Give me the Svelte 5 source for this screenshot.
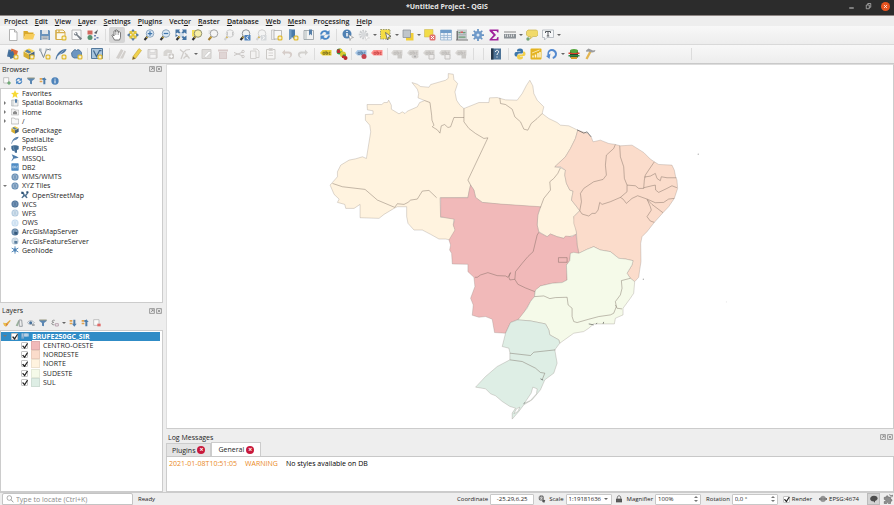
<script>
  const badge = '<rect x="13" y="13" width="10" height="10" rx="3" fill="#dfb92f"/><path d="M18 15v6M15 18h6" stroke="#fff" stroke-width="2"/>';
  const lens = (fill, ring = '#8d9299', grip = '#2e3033') =>
    `<path d="M9 15L3 22" stroke="${grip}" stroke-width="4"/><path d="M10 14L7 17.500" stroke="#d9b13a" stroke-width="3"/><circle cx="14" cy="9" r="7.500" fill="${fill}" stroke="${ring}" stroke-width="2"/>`;
  const tag = (fill, ink) =>
    `<path d="M0 10L5 4H23V15H5Z" fill="${fill}"/><path d="M6 8.500h4v4H6zM12 5.500v7h3v-4h-3M21 8.500h-3v4h3" fill="none" stroke="${ink}" stroke-width="1.500"/>`;
  const globe = (fill, line) =>
    `<circle cx="12" cy="12" r="10.500" fill="${fill}"/><path d="M2 9h20M2 15h20M12 2c-6 6-6 14 0 20M12 2c6 6 6 14 0 20" fill="none" stroke="${line}" stroke-width="1.600"/>`;

  const icons = {
    page: '<path d="M5 1h10l5 5v17H5z" fill="#fff" stroke="#9b9b9b" stroke-width="1.500"/><path d="M15 1v5h5" fill="#eee" stroke="#9b9b9b" stroke-width="1.500"/>',
    open: '<path d="M1 4h8l2 3h10v4H5L1 20z" fill="#d9a92b"/><path d="M5 10h19l-4 11H1z" fill="#f7cd5c"/>',
    save: '<path d="M2 2h18l2 2v18H2z" fill="#6b93bb"/><path d="M6 2h12v8H6z" fill="#e3e6e9"/><path d="M5 14h14v8H5z" fill="#c9ced3"/><path d="M7 16h10M7 19h10" stroke="#717e8b"/>',
    layout: '<path d="M2 2h14l4 4v15H2z" fill="#fbf8ee" stroke="#d5ad4c" stroke-width="2"/><path d="M2 2v19M2 7h18M8 2v5" stroke="#d5ad4c" stroke-width="2.500"/>' + badge,
    manager: '<path d="M2 2h18v19H2z" fill="#fafafa" stroke="#a5a5a5" stroke-width="1.500"/><path d="M6 8a4 4 0 0 0 5 5l8 9 3-3-9-8a4 4 0 0 0-5-5l3 3-2 2z" fill="#747c84"/>',
    style: '<path d="M1 3h10v8H1z" fill="#d2695f"/><path d="M14 8l8-7-3 9z" fill="#5c6065"/><circle cx="6" cy="17" r="5" fill="#569270"/><path d="M14 12h4v3h-4zM19 16h4v3h-4zM14 19h4v3h-4z" fill="#6e83b1"/>',
    pan: '<path d="M7 22L2 13c0-2 3-2 4 1V5c0-2 3-2 3 0V3c0-2 3-2 3 0v2c0-2 3-2 3 0v2c0-2 4-2 4 1v9l-2 5z" fill="#fff" stroke="#4c4c4c" stroke-width="1.400"/><path d="M9 5v7M12 5v7M15 6v6" stroke="#777"/>',
    panSel: '<path d="M12 0l5 6H7zM12 24l5-6H7zM0 12l6-5v10zM24 12l-6-5v10z" fill="#5b80a8"/><path d="M5 4h6v6H5zM13 4h6v6h-6zM5 13h6v6H5zM13 13h6v6h-6zM9 9h6v6H9z" fill="#e2c63a"/>',
    zoomIn: lens('#dbe8f4', '#8ba4bd') + '<path d="M14 4.500v9M9.500 9h9" stroke="#3f76ad" stroke-width="2.500"/>',
    zoomOut: lens('#dbe8f4', '#8ba4bd') + '<path d="M9.500 9h9" stroke="#3f76ad" stroke-width="2.500"/>',
    zoomFull: '<path d="M9 15L3 22" stroke="#2e3033" stroke-width="4"/><path d="M11 13L7 17.500" stroke="#d9b13a" stroke-width="3"/><circle cx="13" cy="11" r="5" fill="#d2deea"/><path d="M1 1h9l-2 3 3 3-3 2-3-2-4 3zM23 1h-9l2 3-3 3 3 2 3-2 4 3zM23 22h-9l2-3-3-3 3-2 3 2 4-3zM1 16v-6l5 3z" fill="#4675a4"/>',
    zoomSel: '<path d="M2 2h11v13H2z" fill="#f4e05a"/>' + lens('#f6eea9', '#8f8f72'),
    zoomLayer: '<path d="M3 2h6v8H3z" fill="#e3e3e3"/>' + lens('#f5f5f5', '#a2a2a2', '#a27b32'),
    zoomNative: lens('#f3f3f3', '#d0d0d0', '#d2d2d2') + '<path d="M9 6v7M19 6v7" stroke="#bbb" stroke-width="1.500"/>',
    zoomLast: lens('#f1f3f5') + '<path d="M11 12h12v11H11z" fill="#4f82bd"/><path d="M19 14l-4 3.500 4 3.500" fill="none" stroke="#fff" stroke-width="2"/>',
    zoomNext: lens('#f4f4f4', '#d0d0d0', '#d2d2d2') + '<path d="M12 12h11v11H12z" fill="#d5d8db"/><path d="M15 14l4 3.500-4 3.500" fill="none" stroke="#fff" stroke-width="2"/>',
    mapView: '<path d="M1 2h7v19H1z" fill="#eee" stroke="#a7a7a7"/><path d="M6 3h15v17H6z" fill="#f7f7f7" stroke="#a7a7a7" stroke-width="1.500"/>' + badge,
    bookNew: '<path d="M4 1h12v21l-6-6-6 6z" fill="#4b7cab"/><path d="M4 1h5v18l-5 3z" fill="#6f9ac2"/>' + badge,
    book: '<path d="M2 3h19v18H2z" fill="#f2f2f2" stroke="#8e959b" stroke-width="1.500"/><path d="M6 3v18" stroke="#9aa" stroke-width="1.500"/><path d="M12 1h6v12l-3-3-3 3z" fill="#557fa8"/>',
    refresh: '<path d="M2 11C3 2 13 0 18 5l3-3v9h-9l3-3C11 4 7 6 6 11zM22 13c-1 9-11 11-16 6l-3 3v-9h9l-3 3c4 4 8 2 9-3z" fill="#4a86c5"/>',
    identify: '<circle cx="10" cy="10" r="9" fill="#5182b4"/><path d="M10 4v2M10 8v7" stroke="#fff" stroke-width="3"/><path d="M13 11l10 6-5 1-2 5z" fill="#fff" stroke="#777"/>',
    action: '<circle cx="11" cy="11" r="7" fill="none" stroke="#c9cbcd" stroke-width="5" stroke-dasharray="3 2"/><circle cx="11" cy="11" r="5" fill="#d8dadc"/><path d="M14 13l9 5-5 1-2 4z" fill="#fff" stroke="#ccc"/>',
    select: '<path d="M1 1h19v19H1z" fill="#f4dc42" stroke="#9a9a72" stroke-width="2" stroke-dasharray="3 2"/><path d="M11 7l11 8-5 1-2 6z" fill="#f7f7f7" stroke="#555" stroke-width="1.500"/>',
    selectForm: '<path d="M8 8h15v15H8z" fill="#f2cf35"/><path d="M2 2h15v15H2z" fill="#bfc5ca" stroke="#8b9299" stroke-width="1.500"/>',
    deselect: '<path d="M1 1h17v15H1z" fill="#f2dc49" stroke="#c5b04a"/><rect x="11" y="11" width="12" height="12" rx="3" fill="#e0716e"/><path d="M14 14l6 6M20 14l-6 6" stroke="#fff" stroke-width="2"/>',
    table: '<path d="M1 2h22v20H1z" fill="#e9f0f7" stroke="#8fb0cf" stroke-width="1.500"/><path d="M1 2h22v6H1z" fill="#6f9cc9"/><path d="M1 13h22M1 17h22M8 8v14M15 8v14" stroke="#94b3d1" stroke-width="1.500"/>',
    calc: '<path d="M2 1h20v20H2z" fill="#c8cccf"/><path d="M0 21h24v2H0zM1 4h3v18H1z" fill="#777"/><path d="M5 7h4M14 7h5M5 16h14" stroke="#6c9c77" stroke-width="2.500"/><path d="M4 11.500h16" stroke="#a5adb2" stroke-width="2"/><path d="M9 5h5v3H9z" fill="#d05e5e"/>',
    gear: '<path d="M12 0v24M0 12h24M3.500 3.500l17 17M20.500 3.500l-17 17" stroke="#6893c2" stroke-width="3.500"/><circle cx="12" cy="12" r="8" fill="#6f9aca"/><circle cx="12" cy="12" r="3" fill="#dce7f2"/>',
    sum: '<path d="M3 1h18v6h-2l-2-3H9l7 8-8 8h9l2-4h2v7H3v-2l8-9-8-8z" fill="#a0219b"/>',
    measure: '<path d="M0 6h24" stroke="#888" stroke-width="2"/><path d="M0 10h24v9H0z" fill="#8b9196"/><path d="M3 11v4M7 11v5M11 11v4M15 11v5M19 11v4" stroke="#eee" stroke-width="1.500"/>',
    tip: '<path d="M4 2h17l3 3v7l-3 3h-7l-6 5 1-5H4l-3-3V5z" fill="#f1da6a" stroke="#cbb65a" stroke-width="1.500"/><circle cx="4" cy="20" r="3.500" fill="#72a477"/>',
    text: '<path d="M1 2h22v15H10l-5 5v-5H1z" fill="#f7f8f9" stroke="#a8afb5" stroke-width="1.500"/><path d="M7 5h10v3M12 5v9M7 5v3M9.500 14h5" stroke="#54595e" stroke-width="2" fill="none"/>',
    source: '<path d="M3 3l14 2-3 15L0 17z" fill="#4e759e"/><path d="M9 1l13 5-4 14L6 14z" fill="#d86a38"/><path d="M2 9l10-3 4 12-9 4z" fill="#3f6e9d" />' + badge,
    geopkg: '<path d="M12 1l11 5-11 6L1 6z" fill="#f2d04a"/><path d="M1 7l11 6v10L1 17z" fill="#d6ae30"/><path d="M12 13l11-6v10l-11 6z" fill="#44607b"/><path d="M8 3l9 5-5 3-8-4z" fill="#577fa8"/>',
    vectorNew: '<path d="M2 3l7 16L15 3h8" fill="none" stroke="#7a8893" stroke-width="2"/><path d="M0 1h5v5H0zM13 1h4v4h-4zM20 1h4v4h-4z" fill="#aab4bc"/>' + badge,
    feather: '<path d="M1 23C3 11 11 2 23 2c-1 6-7 9-11 10-5 2-8 5-9 11z" fill="#5079a5"/><path d="M4 18L17 5" stroke="#c3d3e3"/>',
    virtual: '<path d="M5 5l3-2 3 2 3-2 4 2 3 4v8l-4 3H6l-4-3-1-7z" fill="#6d96c1" stroke="#42698f" stroke-width="1.500"/>' + badge,
    mesh: '<path d="M1 1h22v20H1z" fill="#a9c5dd" stroke="#53789b" stroke-width="2"/><path d="M5 5l6 12 6-12h4" fill="none" stroke="#42688e" stroke-width="2.500"/>' + badge,
    edits: '<path d="M2 20L12 2l5 3L8 22zM10 21L19 5l3 2-6 14z" fill="#d2cfcc"/>',
    pencil: '<path d="M4 17L16 1l5 4L9 21l-6 2z" fill="#f0d14b" stroke="#b99b2c"/><path d="M4 17l5 4-6 2z" fill="#77623a"/>',
    saveOff: '<path d="M2 3h18v17H2z" fill="#e2e0de" stroke="#cbc8c5" stroke-width="2"/><path d="M6 3h10v6H6zM6 13h12v7H6z" fill="#f5f4f3" stroke="#ccc"/>',
    addOff: '<path d="M1 8c5-8 12-4 17-4v6H9v6H1z" fill="#d7d5d2"/><rect x="11" y="11" width="11" height="11" rx="3" fill="#cbc8c5"/><path d="M16.500 13v7M13 16.500h7" stroke="#fff" stroke-width="2"/>',
    vertexOff: '<path d="M2 3l7 6 5-5 8-1M9 9L4 22M12 10l9 11M17 13l-8 8" fill="none" stroke="#cfccc9" stroke-width="2.500"/>',
    modifyOff: '<path d="M2 3h18v18H2z" fill="#dfdddb" stroke="#cecccA" stroke-width="2"/><path d="M6 17l10-11 4 3-10 10z" fill="#fff" stroke="#bbb"/>',
    trashOff: '<path d="M2 3h20v4H2zM4 8h16v14H4z" fill="#d7c9c8"/><path d="M8 9v11M12 9v11M16 9v11" stroke="#eee9e9" stroke-width="1.500"/>',
    cutOff: '<path d="M2 9l18 7M2 15l18-7" stroke="#cbc8c6" stroke-width="2"/><circle cx="20" cy="7" r="2.500" fill="none" stroke="#cbc8c6" stroke-width="2"/><circle cx="20" cy="17" r="2.500" fill="none" stroke="#cbc8c6" stroke-width="2"/>',
    copyOff: '<path d="M3 6h11v15H3zM8 2h8l4 4v13h-6" fill="#f3f2f1" stroke="#ceccca" stroke-width="1.800"/>',
    pasteOff: '<path d="M3 3h17v19H3z" fill="#f6f5f4" stroke="#cbc9c6" stroke-width="2"/><path d="M8 1h7v4H8zM7 10h9M7 15h9" stroke="#d5d3d1" stroke-width="2" fill="none"/>',
    undoOff: '<path d="M8 3L2 9l6 6v-4h7c5 0 5 8-3 9 12 1 14-13 3-13H8z" fill="#d6cdc9"/>',
    redoOff: '<path d="M16 3l6 6-6 6v-4H9c-5 0-5 8 3 9C0 21-2 7 9 7h7z" fill="#d3d1ce"/>',
    label: tag('#e9d032', '#6b5f1c'),
    diagram: '<circle cx="7" cy="7" r="6" fill="#2f9a47"/><path d="M7 7V1a6 6 0 0 1 6 6z" fill="#f4d326"/><circle cx="14" cy="13" r="6" fill="#d9c72f"/><path d="M14 13h6a6 6 0 0 1-6 6z" fill="#2f9a47"/><circle cx="19" cy="20" r="4" fill="#b82828"/><path d="M2 3h6v7H2z" fill="#b92f33"/><path d="M12 15h6v5h-6z" fill="#b92f33"/>',
    labelPin: tag('#a8c7e6', '#4d7299') + '<circle cx="18" cy="17" r="5" fill="#c44350"/>',
    labelRed: tag('#ff8d8b', '#c23b3b'),
    labelOff: tag('#d8d6d3', '#b9b7b4') + '<path d="M13 13h9v8h-9z" fill="#cbc9c6"/>',
    labelEye: tag('#d8d6d3', '#b9b7b4') + '<ellipse cx="16" cy="17" rx="7" ry="4" fill="#d3d1cf"/><circle cx="16" cy="17" r="2" fill="#aaa"/>',
    labelMove: tag('#d8d6d3', '#b9b7b4') + '<path d="M12 13h10v9H12z" fill="#eeeceb" stroke="#c4c2c0" stroke-width="2"/>',
    help: '<path d="M2 1h20v22H2z" fill="#4d7397"/><path d="M2 1h5v22H2z" fill="#26384b"/><path d="M11 8c0-5 7-4 6 0 0 2-3 3-3 6M14 17v2" fill="none" stroke="#fff" stroke-width="2"/>',
    python: '<path d="M12 1c-5 0-6 2-6 5v1h7v1H4c-4 0-4 9 0 9h3v-3c0-2 2-3 4-3h5c2 0 2-2 2-5s-1-5-6-5z" fill="#3d76a9"/><path d="M12 23c5 0 6-2 6-5v-1h-6v-1h8c4 0 4-9 0-9h-2v3c0 2-1 3-4 3h-5c-2 0-3 2-3 5 0 4 3 5 6 5z" fill="#f2cf4c"/>',
    chart: '<rect x="1" y="1" width="22" height="22" rx="2" fill="#e4b321"/><path d="M6 19v-4M11 19v-6M16 19v-9M20 19V8" stroke="#fff6d5" stroke-width="3"/><path d="M4 10L19 4" stroke="#fff6d5" stroke-width="1.500"/>',
    reload: '<path d="M3 15C1 3 12-1 19 5c6 6 2 15-5 17l-1-4c6-2 6-7 3-10-4-4-11-2-10 5l3-2-2 11-7-6z" fill="#5389cf"/>',
    plugin: '<path d="M4 5h16v14H4z" fill="#2f4229"/><path d="M1 9h22v3H1z" fill="#d9442e"/><path d="M1 14h22v3H1z" fill="#2e8b47"/><ellipse cx="12" cy="6" rx="8" ry="4" fill="#56a63d"/><path d="M6 18h12v4H6z" fill="#d59c2e"/>',
    hammer: '<path d="M11 6l4 2-8 15-4-2z" fill="#e3b54f"/><path d="M4 5l5-4 9 4 5-1-2 4-5 1-8-2-3 1z" fill="#9b9c9d"/>',
    addLayer: '<path d="M2 2h15v16H2z" fill="#fafafa" stroke="#aaa" stroke-width="2"/><path d="M18 13v10M13 18h10" stroke="#67a66d" stroke-width="4"/>',
    filter: '<path d="M1 2h22v4l-8 6v10l-6-2v-8L1 6z" fill="#5b87b3"/><path d="M1 2h22v2H1z" fill="#b7a26a"/>',
    collapse: '<path d="M2 3h8v5H2zM2 11h8v5H2z" fill="#e2a24e"/><path d="M10 3h5v5h-5zM16 1l7 8h-4v13h-6V9h-3z" fill="#4f7eac"/>',
    expand: '<path d="M2 3h8v5H2zM2 11h8v5H2z" fill="#e2a24e"/><path d="M13 2h6v12h4l-7 9-7-9h4z" fill="#4f7eac"/>',
    info: '<circle cx="12" cy="12" r="11" fill="#4e83ba"/><path d="M12 5v3M12 10v9" stroke="#fff" stroke-width="3"/>',
    star: '<path d="M12 0l3.500 8 8.500 1-6.500 5.500L19.500 24 12 19l-7.500 5 2-9.500L0 9l8.500-1z" fill="#f7d935"/>',
    home: '<path d="M1 3h9l2 3h11v15H1z" fill="#f2f2f2" stroke="#a5a5a5" stroke-width="1.500"/><path d="M6 13l6-5 6 5v6H6z" fill="#8b8b8b"/>',
    folder: '<path d="M1 3h9l2 3h11v15H1z" fill="#f8f8f8" stroke="#a9a9a9" stroke-width="2"/>',
    elephant: '<path d="M1 3c5-3 17-3 22 0v10l-5 2v8h-6l-2-6-5 1-4-7z" fill="#426c94"/><path d="M8 4v9l4 3" fill="none" stroke="#8fb0cd" stroke-width="1.500"/>',
    mssql: '<path d="M2 1c7 4 14 5 21 10L8 14c-2 4-4 6-7 8 3-7 5-10 5-12z" fill="#4f7eac"/>',
    db2: '<rect x="1" y="1" width="22" height="22" rx="2" fill="#4e8bc4"/><path d="M5 9h4v6H5zM11 9h3v6h-3zM17 9h3l-3 6h3" fill="none" stroke="#cde0f1" stroke-width="1.500"/>',
    wms: globe('#5b84ad', '#c4d5e5'),
    wcs: globe('#4a6f95', '#8facc8'),
    wfs: globe('#aac3da', '#edf3f8'),
    ows: globe('#bfd8ee', '#f4f9fd'),
    osm: '<path d="M1 2l7 2 4 8 8-9 3 2-7 9 4 6-4 2-5-6-7 6-3-2 6-8z" fill="#4e7191"/><path d="M1 2h6v7H1zM16 1h6v5h-6z" fill="#2e5275"/>',
    arcgis: globe('#55799d', '#a9c1d7') + '<path d="M10 12h9v8h-9z" fill="#35597c"/>',
    arcgisF: globe('#b9cad9', '#eef3f7') + '<path d="M10 12h9v8h-9z" fill="#5b7f9f"/>',
    geonode: '<path d="M12 1v22M2 6l20 12M22 6L2 18" stroke="#5c8fbe" stroke-width="3"/><circle cx="12" cy="12" r="5" fill="#4e83b5"/>',
    brush: '<path d="M1 11l9 2L21 3l2 2-9 12-5 6-6-4z" fill="#e0a53c"/><path d="M1 11l10 3-2 7-6-3z" fill="#ecc04a"/><path d="M10 13l4 4-3 3z" fill="#c74e42"/>',
    addGroup: '<path d="M2 20L10 4l4 3-6 15z" fill="#9bb19d"/><path d="M12 3h8l2 19h-9z" fill="none" stroke="#8d9296" stroke-width="2.500"/>',
    eye: '<path d="M1 11C6 3 16 3 22 11 16 18 6 18 1 11z" fill="#e9eef2" stroke="#798590" stroke-width="1.500"/><circle cx="11" cy="11" r="4.500" fill="#48719a"/><path d="M15 16h8v4h-8z" fill="#81888e"/>',
    epsilon: '<path d="M11 4C3 2 1 9 8 10-1 11 2 19 10 17" fill="none" stroke="#777" stroke-width="2.500"/><path d="M13 14h9v7h-9z" fill="none" stroke="#a58395" stroke-width="2"/>',
    removeLayer: '<path d="M2 2h16v17H2z" fill="#fafafa" stroke="#aaa" stroke-width="2"/><path d="M13 14h10v8H13z" fill="#e16967"/>',
    group: '<path d="M1 4h8v16H1z" fill="#7fa9cb"/><path d="M9 4h14v10H9z" fill="#a8c5db"/><path d="M4 4v10M9 9h14M15 4v10" stroke="#d5e3ee" stroke-width="1.500"/>',
    search: '<circle cx="10" cy="9" r="7" fill="none" stroke="#8a8a8a" stroke-width="2"/><path d="M15 14l7 8" stroke="#8a8a8a" stroke-width="2.500"/>',
    extents: '<circle cx="10" cy="9" r="8" fill="#656565"/><path d="M2 9h16M10 1v16M4 4l16 17M16 4L6 15" stroke="#e9e9e9" stroke-width="1.500"/><path d="M13 14l9 1-3 8-6-2z" fill="#555"/>',
    lock: '<path d="M7 11V7c0-6 10-6 10 0v4" fill="none" stroke="#5b5b5b" stroke-width="2.500"/><path d="M3 11h18v11H3z" fill="#4f4f4f"/><path d="M4 15h16M4 18h16" stroke="#858585"/>',
    crs: '<path d="M12 2a10 10 0 0 1 9 7H3a10 10 0 0 1 9-7zM3 15h18a10 10 0 0 1-18 0z" fill="#8f8f8f"/><path d="M0 9h24v6H0z" fill="#777"/><path d="M12 2v20M3 12h18" stroke="#bbb"/>',
    bubble: '<path d="M12 2C-3 2-3 19 10 19l5 4v-5C27 15 25 2 12 2z" fill="#4c4c4c"/>',
    puzzle: '<path d="M3 8h5c-2-5 6-5 4 0h6v5c5-2 5 6 0 4v6h-5c1-4-6-4-4 0H3v-5c5 1 5-6 0-5z" fill="#8e8e8e" stroke="#676767" stroke-width="1.500"/><path d="M16 1l2 4 5-2-2 5" fill="none" stroke="#666" stroke-width="2"/>'
  };
  icons.geopkgNew = icons.geopkg + badge;
  icons.featherNew = icons.feather + badge;

  const menus = [
    ['Pro', 'j', 'ect'], ['', 'E', 'dit'], ['', 'V', 'iew'], ['', 'L', 'ayer'], ['', 'S', 'ettings'],
    ['', 'P', 'lugins'], ['Vect', 'o', 'r'], ['', 'R', 'aster'], ['', 'D', 'atabase'], ['', 'W', 'eb'],
    ['', 'M', 'esh'], ['Pro', 'c', 'essing'], ['', 'H', 'elp']
  ];

  // Entries: icon name, '>' for a drop-down arrow, a number for a divider of that width.
  const mainTools = ['page', 'open', 'save', 'layout', 'manager', 'style', 8, 'pan', 'panSel', 'zoomIn', 'zoomOut',
    'zoomFull', 'zoomSel', 'zoomLayer', 'zoomNative', 'zoomLast', 'zoomNext', 'mapView', 'bookNew', 'book', 'refresh', 7,
    'identify', 'action', '>', 'select', '>', 'selectForm', '>', 'deselect', 'table', 'calc', 'gear', 'sum', 'measure',
    '>', 'tip', 'text', '>'];
  const editTools = ['source', 'geopkgNew', 'vectorNew', 'featherNew', 'virtual', 4, 'mesh', 8, 'edits', 'pencil', 'saveOff',
    'addOff', 'vertexOff', '>', 'modifyOff', 'trashOff', 'cutOff', 'copyOff', 'pasteOff', 'undoOff', 'redoOff', 7,
    'label', 'diagram', 3, 'labelPin', 'labelRed', 4, 'labelOff', 'labelEye', 'labelMove', 'labelMove', 'labelOff', 9, 10,
    'help', 8, 'python', 'chart', 'reload', '>', 'plugin', 'hammer', 186];

  const browserTools = ['addLayer', 'refresh', 'filter', 'collapse', 'info'];
  const layerTools = ['brush', 'addGroup', 'eye', 'filter', 'epsilon', '>', 'expand', 'collapse', 'removeLayer'];

  const sources = [
    ['star', 'Favorites'], ['book', 'Spatial Bookmarks', 'closed'], ['home', 'Home', 'closed'], ['folder', '/', 'closed'],
    ['geopkg', 'GeoPackage'], ['feather', 'SpatiaLite'], ['elephant', 'PostGIS', 'closed'], ['mssql', 'MSSQL'],
    ['db2', 'DB2'], ['wms', 'WMS/WMTS'], ['wms', 'XYZ Tiles', 'open'], ['osm', 'OpenStreetMap', 'child'],
    ['wcs', 'WCS'], ['wfs', 'WFS'], ['ows', 'OWS'], ['arcgis', 'ArcGisMapServer'],
    ['arcgisF', 'ArcGisFeatureServer'], ['geonode', 'GeoNode']
  ];

  let categories = $state([
    { name: 'CENTRO-OESTE', color: '#f1b9b9', on: true },
    { name: 'NORDESTE', color: '#fbdccb', on: true },
    { name: 'NORTE', color: '#fff3df', on: true },
    { name: 'SUDESTE', color: '#f5fae9', on: true },
    { name: 'SUL', color: '#deeee5', on: true }
  ]);
  let layerOn = $state(true);
  let render = $state(true);
</script>

{#snippet icon(name)}
  <svg class="icon" viewBox="0 0 24 24" aria-hidden="true">{@html icons[name]}</svg>
{/snippet}

{#snippet tools(list)}
  {#each list as t}
    {#if t === '>'}
      <button class="more" aria-label="More options"><i></i></button>
    {:else if typeof t === 'number'}
      <span class="divider" style:width="{t}px"></span>
    {:else}
      <button class="tool" class:pressed={t === 'pan'} aria-label={t}>{@render icon(t)}</button>
    {/if}
  {/each}
{/snippet}

{#snippet dockHead(title)}
  <header class="dock-head">
    <h2>{title}</h2>
    <button aria-label="Float {title}"><svg viewBox="0 0 10 10"><path d="M1 1h8v8H1zM3 7l4-4M4 3h3v3" /></svg></button>
    <button aria-label="Close {title}"><svg viewBox="0 0 10 10"><path d="M1 1h8v8H1zM3 3l4 4M7 3L3 7" /></svg></button>
  </header>
{/snippet}

<div class="window">
  <header class="titlebar">
    <h1>*Untitled Project - QGIS</h1>
    <div class="controls">
      <button aria-label="Minimize"><svg viewBox="0 0 12 12"><path d="M3 8h6" stroke="#999" stroke-width="2" /></svg></button>
      <button aria-label="Restore"><svg viewBox="0 0 12 12"><path d="M3 4h4v5H3zM5 4V2h4v5H7" fill="none" stroke="#bbb" /></svg></button>
      <button class="close" aria-label="Close"><svg viewBox="0 0 12 12"><path d="M4 4l4 4M8 4L4 8" stroke="#fff" /></svg></button>
    </div>
  </header>

  <nav class="menubar">
    {#each menus as [a, key, b]}
      <button>{a}<u>{key}</u>{b}</button>
    {/each}
  </nav>

  <div class="toolbar">{@render tools(mainTools)}</div>
  <div class="toolbar second">{@render tools(editTools)}</div>

  <main>
    <aside>
      <section class="dock browser">
        {@render dockHead('Browser')}
        <div class="mini">{@render tools(browserTools)}</div>
        <div class="pane">
          <ul class="tree">
            {#each sources as [ic, name, state]}
              <li class={state}><span class="twist"></span>{@render icon(ic)}<span>{name}</span></li>
            {/each}
          </ul>
        </div>
      </section>
      <section class="dock layers">
        {@render dockHead('Layers')}
        <div class="mini">{@render tools(layerTools)}</div>
        <div class="pane">
          <ul class="tree">
            <li class="open current">
              <span class="twist"></span>
              <label><input type="checkbox" bind:checked={layerOn} />{@render icon('group')}<span>BRUFE250GC_SIR</span></label>
            </li>
            {#each categories as c}
              <li class="category">
                <label><input type="checkbox" bind:checked={c.on} /><i class="swatch" style:background={c.color}></i><span>{c.name}</span></label>
              </li>
            {/each}
          </ul>
        </div>
      </section>
    </aside>

    <div class="work">
      <div class="map">
        <svg viewBox="-462 0 2181 1089" role="img" aria-label="Regions of Brazil">
          <g class="regions">
            <path fill="#fff3df" d="M28 360L35 352 50 335 50 320 60 300 85 285 105 281 125 275 137 280 150 200 147 180 134 165 134 148 157 147 157 137 140 134 139 118 183 118 190 112 200 112 204 105 212 120 212 132 235 146 245 140 253 145 260 138 290 125 297 112 312 106 292 98 294 85 290 72 274 52 290 57 300 64 325 66 330 58 375 45 383 39 383 25 398 27 400 43 411 55 403 80 408 105 418 120 430 130 460 118 475 112 505 112 507 98 530 97 540 100 555 104 590 105 605 85 618 60 628 45 637 62 640 85 650 105 670 125 665 145 685 160 710 172 720 180 745 182 772 195 765 220 750 250 735 275 703 305 720 308 735 315 733 330 738 355 748 375 758 378 753 405 765 420 778 437 760 455 767 485 768 508 755 512 730 520 710 515 690 507 680 515 655 500 650 480 652 450 660 427 540 418 485 412 465 397 460 375 450 360 442 397 358 398 360 457 400 460 398 480 405 495 390 525 375 522 355 522 330 508 305 495 280 495 262 475 258 455 258 425 230 425 220 430 190 448 175 460 118 458 118 418 100 430 75 430 72 418 50 412 55 402 40 388Z"/>
            <path fill="#fbdccb" transform="translate(540 0)" d="M232 195L262 205 272 215 278 230 300 225 325 235 345 238 360 242 395 240 430 262 450 282 462 290 475 298 515 300 522 315 526 335 530 345 532 370 522 400 505 425 488 443 462 472 440 500 425 515 421 535 422 590 418 615 415 637 403 650 390 640 380 625 395 600 398 587 375 582 355 580 330 560 300 555 280 545 260 553 235 565 230 540 228 500 220 475 220 455 238 437 225 420 213 405 218 378 208 375 198 355 193 330 195 315 180 305 163 305 195 275 210 250 225 220Z"/>
            <g transform="translate(330 375)">
              <path fill="#f1b9b9" d="M30 23L112 23 116 0 120 -15 130 0 135 22 155 37 210 42 330 50 322 75 320 105 325 127 350 140 360 132 380 140 400 145 405 138 425 140 437 133 440 165 445 190 420 190 418 212 408 225 410 270 395 278 365 280 330 288 313 305 312 320 300 335 270 385 240 398 225 430 192 428 185 388 165 380 145 382 125 376 128 345 120 325 133 290 130 262 112 245 112 223 65 222 63 190 57 180 60 165 55 150 73 120 68 105 72 88 30 80Z"/>
              <path fill="#f5fae9" d="M445 190L470 178 490 170 510 180 540 185 565 205 585 207 608 212 605 225 590 250 600 265 613 275 610 310 600 325 578 355 578 375 555 385 552 402 490 402 475 415 460 425 430 430 388 460 385 450 358 435 355 420 345 402 300 393 262 390 290 355 300 335 312 320 315 300 330 288 365 280 395 278 410 270 408 225 418 212 420 190 430 187Z"/>
              <path fill="#deeee5" d="M240 398L262 390 300 393 345 402 355 420 358 435 385 450 388 460 373 480 380 520 370 550 343 570 330 600 305 630 280 645 265 665 245 688 245 670 255 655 238 650 215 635 195 618 180 612 165 597 135 592 165 560 200 530 238 510 238 488 235 475 215 470 225 430Z"/>
              <path fill="#fff" d="M320 597L307 592 302 610 282 640 300 632 318 612ZM268 652L262 665 250 672 258 657Z"/>
            </g>
          </g>
          <g class="borders">
            <path d="M35 355L65 365 133 373 170 405 222 427 230 416 250 418 262 412 270 405 290 402 305 378 325 376 348 398M312 106L328 112 333 150 334 165 340 180 335 185 350 194 358 204 362 182 372 178 382 187 390 185 400 157 430 157M430 130L430 170 445 190 465 205 490 220 502 218 442 345 450 360M538 98L540 115 555 118 575 132 583 155 600 170 610 192 622 195 632 175 650 160 665 145M720 308L712 325 700 340 688 350 690 375 670 400 660 427"/>
            <path transform="translate(540 0)" d="M345 238L340 250 318 270 315 300 318 330 308 343 280 350 250 370 240 385 243 410 238 437 245 447 265 453 275 445 285 445 293 435 298 412 305 418 330 410 360 397 380 380 380 360 372 340 370 305 360 275 358 242M380 360L405 362 415 370 430 370 432 345 435 330 445 315 462 290M432 336L450 333 465 325 470 340 480 347 483 335 500 338 528 338M430 368L455 362 465 360 466 375 475 382 500 370 515 362 530 368M360 397L368 402 378 415 395 400 412 392 440 402 465 413 490 412 505 402 522 400M442 405L455 418 488 443M440 402L450 425 453 435 440 455 450 468 462 472"/>
            <g transform="translate(330 375)">
              <path d="M325 127L320 135 308 185 292 200 275 220 255 245 253 268 238 270 235 262 240 248 232 262 225 258 200 257 172 248 150 255 140 262 133 262M253 268L262 283 285 294 313 305M384 203h26v14h-26zM312 320L340 318 358 326 375 323 410 322 413 345 425 355 425 380 430 395 440 398 475 388 505 380 540 375 550 370 558 350 555 335 570 315 575 295 573 272 600 265M555 345L560 355 575 357M238 490L300 497 310 487 375 480M238 510L275 515 315 535 330 548 343 550 335 570"/>
            </g>
            <path class="coast" d="M770 194L790 204 800 200 812 215M805 777L820 780M827 778L830 774M848 777L850 771M660 942L668 946M609 1017L613 1014"/>
          </g>
          <g fill="#aaa"><circle cx="1134" cy="267" r="2"/><circle cx="969" cy="643" r="2"/><circle cx="1218" cy="711" r="1"/></g>
        </svg>
      </div>

      <section class="log">
        {@render dockHead('Log Messages')}
        <div class="tabs" role="tablist">
          <button role="tab" aria-selected="false">Plugins <b>×</b></button>
          <button role="tab" aria-selected="true">General <b>×</b></button>
        </div>
        <div class="messages"><time>2021-01-08T10:51:05</time><em>WARNING</em><span>No styles available on DB</span></div>
      </section>
    </div>
  </main>

  <footer class="status">
    <div class="locator">{@render icon('search')}<input type="text" placeholder="Type to locate (Ctrl+K)" aria-label="Locator" /></div>
    <span class="ready">Ready</span>
    <label class="field coord">Coordinate<input type="text" value="-25.29,6.25" /></label>
    <button class="flat ext" aria-label="Toggle extents">{@render icon('extents')}</button>
    <label class="field scale">Scale<span class="box"><select><option>1:19181636</option></select><i></i></span></label>
    <button class="flat lock" aria-label="Lock scale">{@render icon('lock')}</button>
    <div class="field"><label for="mag">Magnifier</label><span class="box"><input id="mag" type="text" value="100%" /><span class="spin"><button aria-label="Increase magnifier"></button><button aria-label="Decrease magnifier"></button></span></span></div>
    <div class="field rotation"><label for="rot">Rotation</label><span class="box"><input id="rot" type="text" value="0,0 °" /><span class="spin"><button aria-label="Increase rotation"></button><button aria-label="Decrease rotation"></button></span></span></div>
    <label class="render"><input type="checkbox" bind:checked={render} />Render</label>
    <button class="flat crs">{@render icon('crs')}EPSG:4674</button>
    <button class="flat bubble" aria-label="Messages">{@render icon('bubble')}</button>
    <button class="flat puzzle" aria-label="Plugins available">{@render icon('puzzle')}</button>
  </footer>
</div>

<style>
  :global(body) { margin: 0; }
  * { box-sizing: border-box; }
  .window {
    display: flex; flex-direction: column; height: 100vh; overflow: hidden;
    background: #eee; color: #1c1c1c;
    font: 500 7px/9px "Open Sans", "Noto Sans", sans-serif;
  }
  button, input, select { font: inherit; color: inherit; margin: 0; padding: 0; border: 0; background: none; border-radius: 0; min-width: 0; }
  h1, h2, ul { margin: 0; padding: 0; font: inherit; list-style: none; }
  .icon { display: block; flex: none; width: 8px; height: 8px; }

  .titlebar { display: grid; grid-template-columns: 1fr auto 1fr; align-items: center; flex: none; height: 16px; padding-bottom: 2px; background: #2c2c2c; border-bottom: 1px solid #8d8583; color: #e6e6e6; }
  .titlebar h1 { grid-column: 2; font-weight: 700; }
  .controls { display: flex; justify-content: flex-end; gap: 8px; padding-right: 4px; }
  .controls button { width: 9px; height: 9px; }
  .controls svg { display: block; width: 9px; height: 9px; }
  .controls .close { background: #e95420; border-radius: 50%; }

  .menubar { display: flex; flex: none; gap: 7px; height: 10px; padding: 0 4px; font-weight: 600; }
  u { text-underline-offset: 1px; text-decoration-thickness: 1px; }

  .toolbar { display: flex; align-items: center; flex: none; height: 19px; padding: 0 5px; background: linear-gradient(#f8f8f8, #ededed); border-bottom: 1px solid #d9d9d9; }
  .second { border-bottom-color: #c9c9c9; }
  .tool { display: grid; place-items: center; flex: none; width: 16px; height: 16px; }
  .tool .icon { width: 12px; height: 12px; }
  .pressed { background: #d5d5d5; border-radius: 2px; }
  .more { display: grid; place-items: center; flex: none; width: 6px; height: 12px; }
  .more i, .scale i { border: 2px solid transparent; border-top-color: #666; border-bottom: 0; }
  .divider { flex: none; height: 12px; background: linear-gradient(90deg, #dcdcdc, #dcdcdc) center / 1px 100% no-repeat; }

  main { display: flex; flex: 1; gap: 3px; min-height: 0; }
  aside { display: flex; flex-direction: column; flex: 0 0 163px; min-height: 0; }
  .dock { display: flex; flex-direction: column; min-height: 0; }
  .browser { flex: 240; }
  .layers { flex: 187; padding-top: 3px; }
  .dock-head { display: flex; align-items: center; flex: none; gap: 1px; height: 10px; padding: 0 1px 0 2px; }
  .dock-head h2 { flex: 1; }
  .dock-head button { width: 6px; height: 6px; }
  .dock-head svg { display: block; width: 6px; height: 6px; fill: none; stroke: #666; }
  .mini { display: flex; align-items: center; flex: none; height: 14px; padding-left: 1px; }
  .mini .tool { width: 12px; height: 12px; }
  .mini .tool .icon { width: 8px; height: 8px; }
  .pane { flex: 1; min-height: 0; background: #fff; border: 1px solid #ccc; }

  .tree { display: grid; grid-auto-rows: 1fr; height: 166px; }
  .layers .tree { height: 56px; padding-top: 1px; }
  li { display: flex; align-items: center; gap: 3px; min-height: 0; }
  li label { display: flex; align-items: center; gap: 3px; }
  .twist { display: grid; place-items: center; flex: none; width: 7px; height: 8px; }
  .closed .twist::before { content: ""; border: 2px solid transparent; border-left-color: #777; border-right: 0; }
  .open .twist::before { content: ""; border: 2px solid transparent; border-top-color: #777; border-bottom: 0; }
  .child { padding-left: 10px; }
  .current { margin-right: 2px; background: #308cc6; color: #fff; font-weight: 700; text-decoration: underline; }
  .category { padding-left: 20px; }
  .swatch { width: 9px; height: 9px; border: 1px solid #0001; }
  input[type="checkbox"] { appearance: none; display: grid; place-items: center; flex: none; width: 7px; height: 7px; background: #fff; border: 1px solid #c4c4c4; border-radius: 1px; }
  input[type="checkbox"]:checked::before { content: ""; width: 6px; height: 6px; background: #222; clip-path: polygon(0 50%, 20% 40%, 42% 65%, 85% 0, 100% 10%, 45% 100%); }

  .work { display: flex; flex-direction: column; flex: 1; min-width: 0; }
  .map { flex: 1; min-height: 0; background: #fff; border: 1px solid #ccc; border-top-color: #ddd; border-left-color: #ddd; }
  .map svg { display: block; width: 100%; height: 100%; }
  .regions path { stroke: #8a8078; stroke-opacity: 0.35; stroke-width: 2.500; stroke-linejoin: round; }
  .borders path { fill: none; stroke: #6b5a50; stroke-opacity: 0.4; stroke-width: 3; stroke-linejoin: round; }
  .borders .coast { stroke: #444; stroke-opacity: 0.6; }

  .log { flex: none; padding-top: 3px; font-weight: 400; }
  .log h2 { font-weight: 500; }
  .tabs { display: flex; align-items: flex-end; height: 15px; border-bottom: 1px solid #c8c8c8; font-weight: 500; }
  .tabs button { display: flex; align-items: center; gap: 2px; height: 13px; padding: 0 5px; background: #e4e4e4; border: 1px solid #ccc; border-bottom: 0; }
  .tabs button[aria-selected="true"] { height: 14px; padding: 0 6px; background: #fff; }
  .tabs b { display: grid; place-items: center; width: 8px; height: 8px; border-radius: 50%; background: #c8193c; color: #fff; line-height: 8px; }
  .messages { display: flex; gap: 8px; height: 35px; padding: 2px 2px; background: #fff; border: 1px solid #ccc; border-top: 0; }
  time, em { color: #ea8a1e; font-style: normal; }
  .messages span { color: #000; }

  .status { display: flex; align-items: center; flex: none; height: 13px; padding: 0 1px 0 2px; border-top: 1px solid #ccc; font-size: 6px; }
  .locator { display: flex; align-items: center; gap: 2px; flex: none; width: 131px; height: 12px; padding: 0 3px; background: #fff; border: 1px solid #c4c4c4; border-radius: 2px 2px 0 0; font-size: 7px; }
  .locator input { flex: 1; height: 9px; outline: 0; }
  .locator input::placeholder { color: #8a8a8a; opacity: 1; }
  .ready { flex: 1; padding-left: 5px; }
  .field { display: flex; align-items: center; gap: 2px; flex: none; }
  .coord input { width: 44px; text-align: center; }
  .coord input, .box { height: 11px; background: #fff; border: 1px solid #c8c8c8; border-radius: 1px; }
  .box { display: flex; align-items: center; width: 46px; padding-left: 2px; }
  .box input { flex: 1; width: 20px; }
  select { appearance: none; flex: 1; }
  .scale i { margin: 0 3px; }
  .spin { display: grid; gap: 2px; width: 6px; padding-right: 2px; }
  .spin button { border: 2px solid transparent; border-bottom-color: #777; border-top: 0; width: 4px; height: 2px; }
  .spin button + button { border-bottom: 0; border-top: 2px solid #777; }
  .flat { display: flex; align-items: center; justify-content: center; gap: 2px; flex: none; height: 12px; }
  .ext, .lock { width: 15px; }
  .rotation { padding: 0 5px; }
  .render { display: flex; align-items: center; gap: 2px; padding-right: 7px; }
  .bubble { width: 13px; margin: 0 3px 0 8px; background: #d3d3d3; border: 1px solid #bbb; }
  .puzzle .icon { width: 10px; height: 10px; }
</style>
